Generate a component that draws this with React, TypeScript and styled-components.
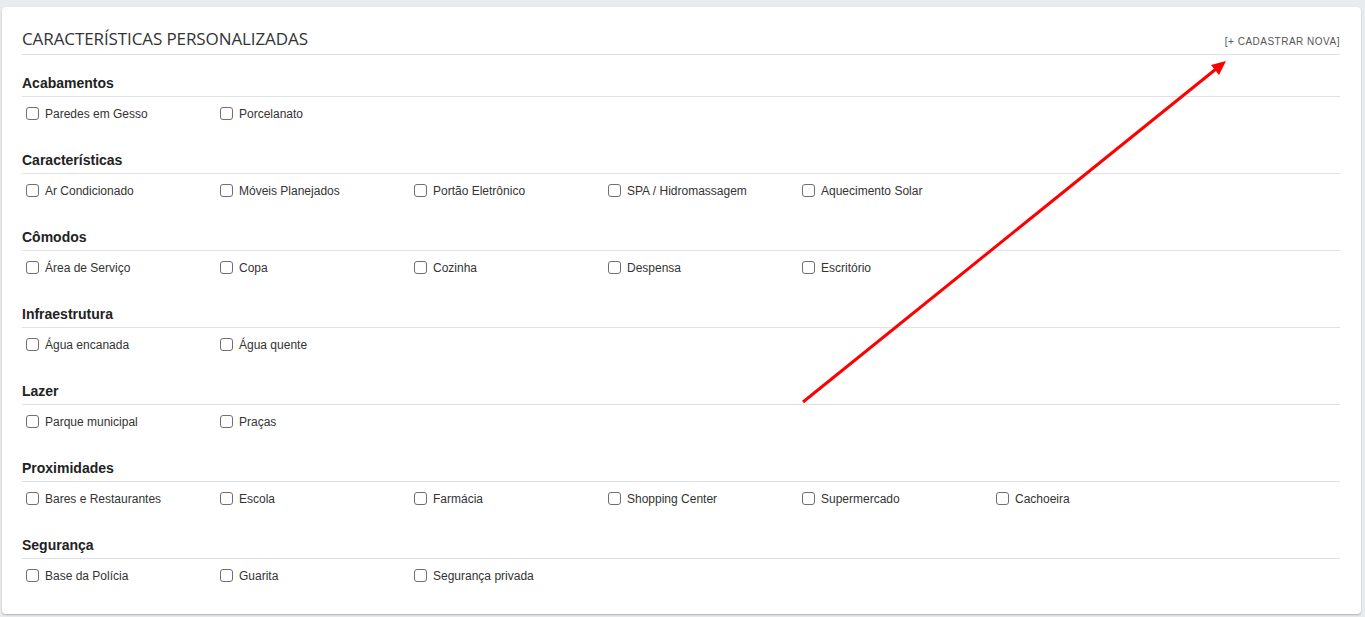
import React from "react";
import styled, { createGlobalStyle } from "styled-components";

const GlobalStyle = createGlobalStyle`
  html, body {
    margin: 0;
    padding: 0;
    background: #e9ecef;
  }
  body {
    font-family: "Liberation Sans", Arial, sans-serif;
  }
`;

interface Group {
  title: string;
  items: string[];
}

const groups: Group[] = [
  { title: "Acabamentos", items: ["Paredes em Gesso", "Porcelanato"] },
  {
    title: "Características",
    items: [
      "Ar Condicionado",
      "Móveis Planejados",
      "Portão Eletrônico",
      "SPA / Hidromassagem",
      "Aquecimento Solar",
    ],
  },
  {
    title: "Cômodos",
    items: ["Área de Serviço", "Copa", "Cozinha", "Despensa", "Escritório"],
  },
  { title: "Infraestrutura", items: ["Água encanada", "Água quente"] },
  { title: "Lazer", items: ["Parque municipal", "Praças"] },
  {
    title: "Proximidades",
    items: [
      "Bares e Restaurantes",
      "Escola",
      "Farmácia",
      "Shopping Center",
      "Supermercado",
      "Cachoeira",
    ],
  },
  {
    title: "Segurança",
    items: ["Base da Polícia", "Guarita", "Segurança privada"],
  },
];

const Page = styled.div`
  position: relative;
  padding: 7px 4px 3px 2px;
`;

const Card = styled.div`
  background: #fff;
  border-radius: 4px;
  box-shadow: 0 1px 2px rgba(0, 0, 0, 0.25);
  padding: 21px 21px 29px 20px;
`;

const CardHeader = styled.div`
  display: flex;
  justify-content: space-between;
  align-items: flex-end;
  padding-bottom: 4px;
  border-bottom: 1px solid #dee2e6;
`;

const CardTitle = styled.h3`
  margin: 0;
  font-family: "Open Sans", "Noto Sans", sans-serif;
  font-weight: 400;
  font-size: 17px;
  line-height: 22px;
  letter-spacing: -0.1px;
  color: #333;
`;

const AddLink = styled.a`
  font-family: "Liberation Sans", Arial, sans-serif;
  font-size: 10px;
  line-height: 14px;
  color: #555;
  letter-spacing: 0.5px;
  text-decoration: none;
  margin-bottom: 1px;
  cursor: pointer;
`;

const Section = styled.section`
  margin-top: 18px;

  & + & {
    margin-top: 27px;
  }
`;

const SectionTitle = styled.h4`
  margin: 0;
  font-size: 14px;
  font-weight: 700;
  line-height: 20px;
  color: #222;
  padding-bottom: 3px;
  border-bottom: 1px solid #dee2e6;
`;

const OptionGrid = styled.div`
  display: grid;
  grid-template-columns: repeat(auto-fill, 194px);
  margin-top: 7px;
`;

const Option = styled.label`
  display: flex;
  align-items: center;
  height: 19px;
  font-size: 12px;
  color: #333;
  cursor: pointer;

  input {
    appearance: none;
    box-sizing: border-box;
    width: 13px;
    height: 13px;
    margin: 3px 6px 3px 4px;
    border: 1px solid #6f6f6f;
    border-radius: 3px;
    background: #fff;
  }

  input:checked {
    background: #0075ff;
    border-color: #0075ff;
  }
`;

const ArrowLayer = styled.svg`
  position: absolute;
  top: 0;
  left: 0;
  pointer-events: none;
`;

const App = () => {
  return (
    <>
      <GlobalStyle />
      <Page>
        <Card>
          <CardHeader>
            <CardTitle>CARACTERÍSTICAS PERSONALIZADAS</CardTitle>
            <AddLink>[+ CADASTRAR NOVA]</AddLink>
          </CardHeader>

          {groups.map((group) => (
            <Section key={group.title}>
              <SectionTitle>{group.title}</SectionTitle>
              <OptionGrid>
                {group.items.map((item) => (
                  <Option key={item}>
                    <input type="checkbox" />
                    {item}
                  </Option>
                ))}
              </OptionGrid>
            </Section>
          ))}
        </Card>

        <ArrowLayer width="1365" height="617">
          <line
            x1="803"
            y1="402"
            x2="1216"
            y2="69"
            stroke="#f00"
            strokeWidth="3"
          />
          <polygon points="1226,61 1211,65 1219,75" fill="#f00" />
        </ArrowLayer>
      </Page>
    </>
  );
};

export default App;
